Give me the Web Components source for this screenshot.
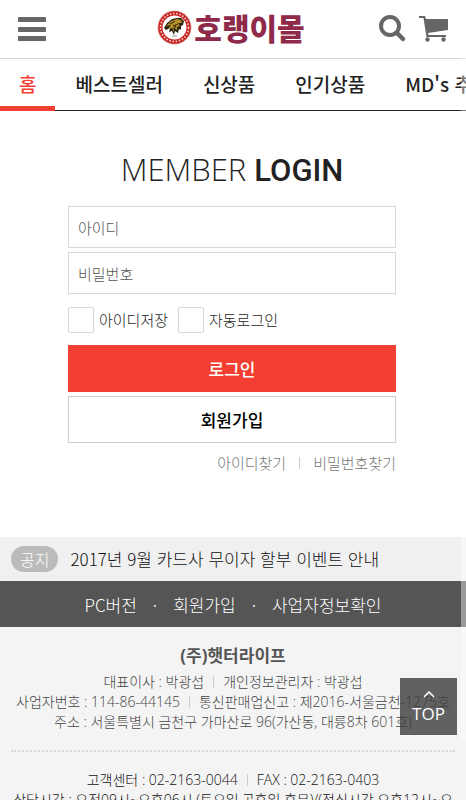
<!DOCTYPE html>
<html lang="ko">
<head>
<meta charset="utf-8">
<meta name="viewport" content="width=device-width, initial-scale=1">
<title>호랭이몰</title>
<style>
  html {
    height: 100%;
    overflow: hidden;
  }

  body {
    height: 100%;
    margin: 0;
    overflow: hidden;
    background: #fff;
    color: #222;
    font-family: "Noto Sans CJK KR", sans-serif;
    font-weight: 300;
  }
</style>
</head>
<body>
<mall-page>
  <mall-header></mall-header>
  <mall-nav></mall-nav>
  <login-form></login-form>
  <notice-bar label="공지">2017년 9월 카드사 무이자 할부 이벤트 안내</notice-bar>
  <footer-menu></footer-menu>
  <company-info></company-info>
  <top-button slot="floating">TOP</top-button>
</mall-page>

<script>
function makeTemplate(html) {
  const template = document.createElement('template');
  template.innerHTML = html;
  return template;
}

class BaseElement extends HTMLElement {
  constructor() {
    super();
    this._shadowRoot = this.attachShadow({ mode: 'open' });
    this._shadowRoot.appendChild(this.constructor.template.content.cloneNode(true));
  }
}

class MallPage extends BaseElement {
  static template = makeTemplate(`
<style>
  :host {
    display: block;
    position: relative;
    height: 100%;
    overflow: hidden;
  }

  .floating {
    position: absolute;
    right: 9px;
    bottom: 65px;
  }

  .scrollbar {
    position: absolute;
    top: 0;
    right: 0;
    width: 5px;
    height: 740px;
    background: rgba(255, 255, 255, 0.4);
  }
</style>

<main><slot></slot></main>
<div class="floating"><slot name="floating"></slot></div>
<div class="scrollbar"></div>
`);
}

class MallHeader extends BaseElement {
  static template = makeTemplate(`
<style>
  :host {
    display: block;
    border-bottom: 1px solid #d4d4d4;
  }

  header {
    display: grid;
    grid-template-columns: 1fr auto 1fr;
    align-items: center;
    height: 58px;
    padding: 0 17px;
  }

  button {
    display: block;
    padding: 0;
    border: 0;
    background: none;
    color: #666;
  }

  svg {
    display: block;
  }

  .logo {
    display: flex;
    align-items: center;
    gap: 2px;
    padding: 0 4px 4px 0;
    color: #8f2a4a;
    font-size: 30px;
    font-weight: 900;
    line-height: 40px;
    text-decoration: none;
  }

  .tools {
    display: flex;
    align-items: center;
    justify-content: flex-end;
    gap: 12px;
    padding-bottom: 2px;
  }
</style>

<header>
  <button type="button" aria-label="메뉴">
    <svg width="30" height="26" viewBox="0 0 30 26" fill="currentColor">
      <rect x="1" y="1" width="28" height="5" rx="1"/>
      <rect x="1" y="11" width="28" height="5" rx="1"/>
      <rect x="1" y="20" width="28" height="5" rx="1"/>
    </svg>
  </button>
  <a class="logo" href="#">
    <svg width="35" height="35" viewBox="0 0 35 35">
      <circle cx="17.500" cy="17.500" r="17" fill="#d9a3a0"/>
      <circle cx="17.500" cy="17.500" r="16.200" fill="#c9211e"/>
      <circle cx="17.500" cy="17.500" r="14" fill="none" stroke="#f5d9d2" stroke-width="1.600" stroke-dasharray="1.500 1.700"/>
      <circle cx="17.500" cy="17.500" r="12" fill="#fff"/>
      <path d="M7 18 10 13 15 9 20 8 24 8 27 11 26 15 24 16 24 20 22 19 21 23 18 21 17 25 15 21 12 22 13 18 9 20Z" fill="#2c230f"/>
      <path d="M9 16 14 11 20 9 24 10 25 13 21 13 23 16 20 17 20 20 17 18 17 22 15 18 11 19 14 15Z" fill="#b6922c"/>
      <path d="M13 14 18 11M16 16 21 14M16 19 19 16" stroke="#44330f" stroke-width="1.200"/>
      <path d="M15 26h5" stroke="#999"/>
    </svg>
    <span>호랭이몰</span>
  </a>
  <div class="tools">
    <button type="button" aria-label="검색">
      <svg width="28" height="28" viewBox="0 0 28 28" fill="none" stroke="currentColor">
        <circle cx="12" cy="12" r="9" stroke-width="4"/>
        <path d="M19 19 25 25" stroke-width="4.500" stroke-linecap="round"/>
      </svg>
    </button>
    <button type="button" aria-label="장바구니">
      <svg width="31" height="27" viewBox="0 0 31 27" fill="currentColor">
        <path d="M1 1H7L8 4H30V15L10 18 10.500 20H28V22H8.500L5.500 3H1Z"/>
        <circle cx="9.500" cy="24.500" r="2.200"/>
        <circle cx="25.500" cy="24.500" r="2.200"/>
      </svg>
    </button>
  </div>
</header>
`);
}

class MallNav extends BaseElement {
  static template = makeTemplate(`
<style>
  :host {
    display: block;
    overflow: hidden;
  }

  nav {
    display: flex;
    height: 51px;
    border-bottom: 1px solid #222;
  }

  a {
    flex: none;
    padding: 0 20px;
    color: #222;
    font-size: 19px;
    font-weight: 500;
    line-height: 50px;
    text-decoration: none;
    white-space: nowrap;
  }

  a.active {
    height: 47px;
    padding: 0 19px;
    border-bottom: 5px solid #f33f32;
    color: #f33f32;
  }
</style>

<nav>
  <a class="active" href="#">홈</a>
  <a href="#">베스트셀러</a>
  <a href="#">신상품</a>
  <a href="#">인기상품</a>
  <a href="#">MD's 추천</a>
</nav>
`);
}

class LoginForm extends BaseElement {
  static template = makeTemplate(`
<style>
  :host {
    display: block;
    padding: 34px 70px 62px 68px;
  }

  h1 {
    margin: 0 0 11px;
    color: #222;
    font-family: "Open Sans", sans-serif;
    font-size: 31px;
    font-weight: 300;
    line-height: 48px;
    text-align: center;
  }

  h1 strong {
    font-family: Roboto, sans-serif;
    font-weight: 500;
  }

  form {
    display: flex;
    flex-direction: column;
    gap: 4px;
    margin: 0;
  }

  input, button {
    box-sizing: border-box;
    margin: 0;
    border-radius: 0;
    font-family: inherit;
  }

  .field {
    width: 100%;
    height: 42px;
    padding: 0 9px;
    border: 1px solid #d8d8d8;
    font-size: 15px;
    font-weight: 300;
  }

  .field::placeholder {
    color: #555;
  }

  .options {
    display: flex;
    gap: 10px;
    margin: 9px 0 8px;
  }

  label {
    display: flex;
    align-items: center;
    gap: 5px;
    color: #222;
    font-size: 15px;
    line-height: 26px;
  }

  input[type="checkbox"] {
    width: 26px;
    height: 26px;
    border: 1px solid #d8d8d8;
    border-radius: 2px;
    background: #fff;
    appearance: none;
  }

  input[type="checkbox"]:checked {
    background: #f33f32;
  }

  button {
    height: 47px;
    border: 1px solid #ccc;
    background: #fff;
    color: #000;
    font-size: 17px;
    font-weight: 500;
  }

  button.primary {
    border-color: #f33f32;
    background: #f33f32;
    color: #fff;
  }

  .find {
    display: flex;
    align-items: center;
    justify-content: flex-end;
    gap: 13px;
    margin-top: 4px;
    font-size: 15px;
    line-height: 24px;
  }

  .find a {
    color: #777;
    text-decoration: none;
  }

  .find i {
    width: 1px;
    height: 12px;
    background: #ccc;
  }
</style>

<h1>MEMBER <strong>LOGIN</strong></h1>
<form>
  <input class="field" type="text" placeholder="아이디" aria-label="아이디">
  <input class="field" type="password" placeholder="비밀번호" aria-label="비밀번호">
  <div class="options">
    <label><input type="checkbox">아이디저장</label>
    <label><input type="checkbox">자동로그인</label>
  </div>
  <button class="primary" type="submit">로그인</button>
  <button type="button">회원가입</button>
  <div class="find">
    <a href="#">아이디찾기</a>
    <i></i>
    <a href="#">비밀번호찾기</a>
  </div>
</form>
`);

  constructor() {
    super();
    this.$form = this._shadowRoot.querySelector('form');
    this.$form.addEventListener('submit', event => event.preventDefault());
  }
}

class NoticeBar extends BaseElement {
  static template = makeTemplate(`
<style>
  :host {
    display: flex;
    align-items: center;
    gap: 12px;
    height: 44px;
    padding: 0 11px;
    background: #f0f0f0;
  }

  .label {
    flex: none;
    padding: 0 9px;
    border-radius: 13px;
    background: #bbb;
    color: #fff;
    font-size: 16px;
    line-height: 26px;
  }

  a {
    color: #111;
    font-size: 17px;
    line-height: 26px;
    text-decoration: none;
    white-space: nowrap;
  }
</style>

<span class="label"></span>
<a href="#"><slot></slot></a>
`);

  connectedCallback() {
    this._shadowRoot.querySelector('.label').textContent = this.getAttribute('label');
  }
}

class FooterMenu extends BaseElement {
  static template = makeTemplate(`
<style>
  :host {
    display: block;
    background: #555;
  }

  nav {
    display: flex;
    align-items: center;
    justify-content: center;
    gap: 16px;
    height: 46px;
    color: #fff;
    font-size: 17px;
    white-space: nowrap;
  }

  a {
    color: inherit;
    text-decoration: none;
  }
</style>

<nav>
  <a href="#">PC버전</a>
  <span>·</span>
  <a href="#">회원가입</a>
  <span>·</span>
  <a href="#">사업자정보확인</a>
</nav>
`);
}

class CompanyInfo extends BaseElement {
  static template = makeTemplate(`
<style>
  :host {
    display: block;
    padding: 16px 11px;
    background: #f4f4f4;
    color: #444;
    font-family: "Open Sans", "Noto Sans CJK KR", sans-serif;
    font-size: 14px;
    line-height: 20px;
    text-align: center;
  }

  h2 {
    margin: 0 0 3px;
    color: #555;
    font-size: 17px;
    font-weight: 700;
    line-height: 26px;
  }

  p {
    margin: 0;
  }

  .bar {
    display: inline-block;
    width: 1px;
    height: 12px;
    margin: 0 9px;
    background: #ccc;
    vertical-align: -1px;
  }

  .contact {
    margin-top: 18px;
    padding-top: 18px;
    border-top: 2px dotted #d8d8d8;
    color: #111;
  }
</style>

<h2>(주)햇터라이프</h2>
<p>대표이사 : 박광섭<i class="bar"></i>개인정보관리자 : 박광섭</p>
<p>사업자번호 : 114-86-44145<i class="bar"></i>통신판매업신고 : 제2016-서울금천-1275호</p>
<p>주소 : 서울특별시 금천구 가마산로 96(가산동, 대륭8차 601호)</p>
<div class="contact">
  <p>고객센터 : 02-2163-0044<i class="bar"></i>FAX : 02-2163-0403</p>
  <p>상담시간 : 오전09시~오후06시 (토요일,공휴일 휴무)/(점심시간 오후12시~오후1시)</p>
</div>
`);
}

class TopButton extends BaseElement {
  static template = makeTemplate(`
<style>
  :host {
    display: block;
  }

  button {
    display: flex;
    flex-direction: column;
    align-items: center;
    justify-content: center;
    box-sizing: border-box;
    width: 57px;
    height: 57px;
    padding: 8px 0 0;
    border: 0;
    background: rgba(60, 60, 60, 0.8);
    color: #fff;
    font-family: "Open Sans", sans-serif;
    font-size: 17px;
    font-weight: 400;
    line-height: 32px;
  }
</style>

<button type="button">
  <svg width="12" height="7" viewBox="0 0 12 7" fill="none" stroke="currentColor" stroke-width="1.500">
    <path d="M1 6 6 1 11 6"/>
  </svg>
  <slot></slot>
</button>
`);

  constructor() {
    super();
    this._shadowRoot.querySelector('button')
      .addEventListener('click', () => window.scrollTo(0, 0));
  }
}

customElements.define('mall-page', MallPage);
customElements.define('mall-header', MallHeader);
customElements.define('mall-nav', MallNav);
customElements.define('login-form', LoginForm);
customElements.define('notice-bar', NoticeBar);
customElements.define('footer-menu', FooterMenu);
customElements.define('company-info', CompanyInfo);
customElements.define('top-button', TopButton);
</script>
</body>
</html>
